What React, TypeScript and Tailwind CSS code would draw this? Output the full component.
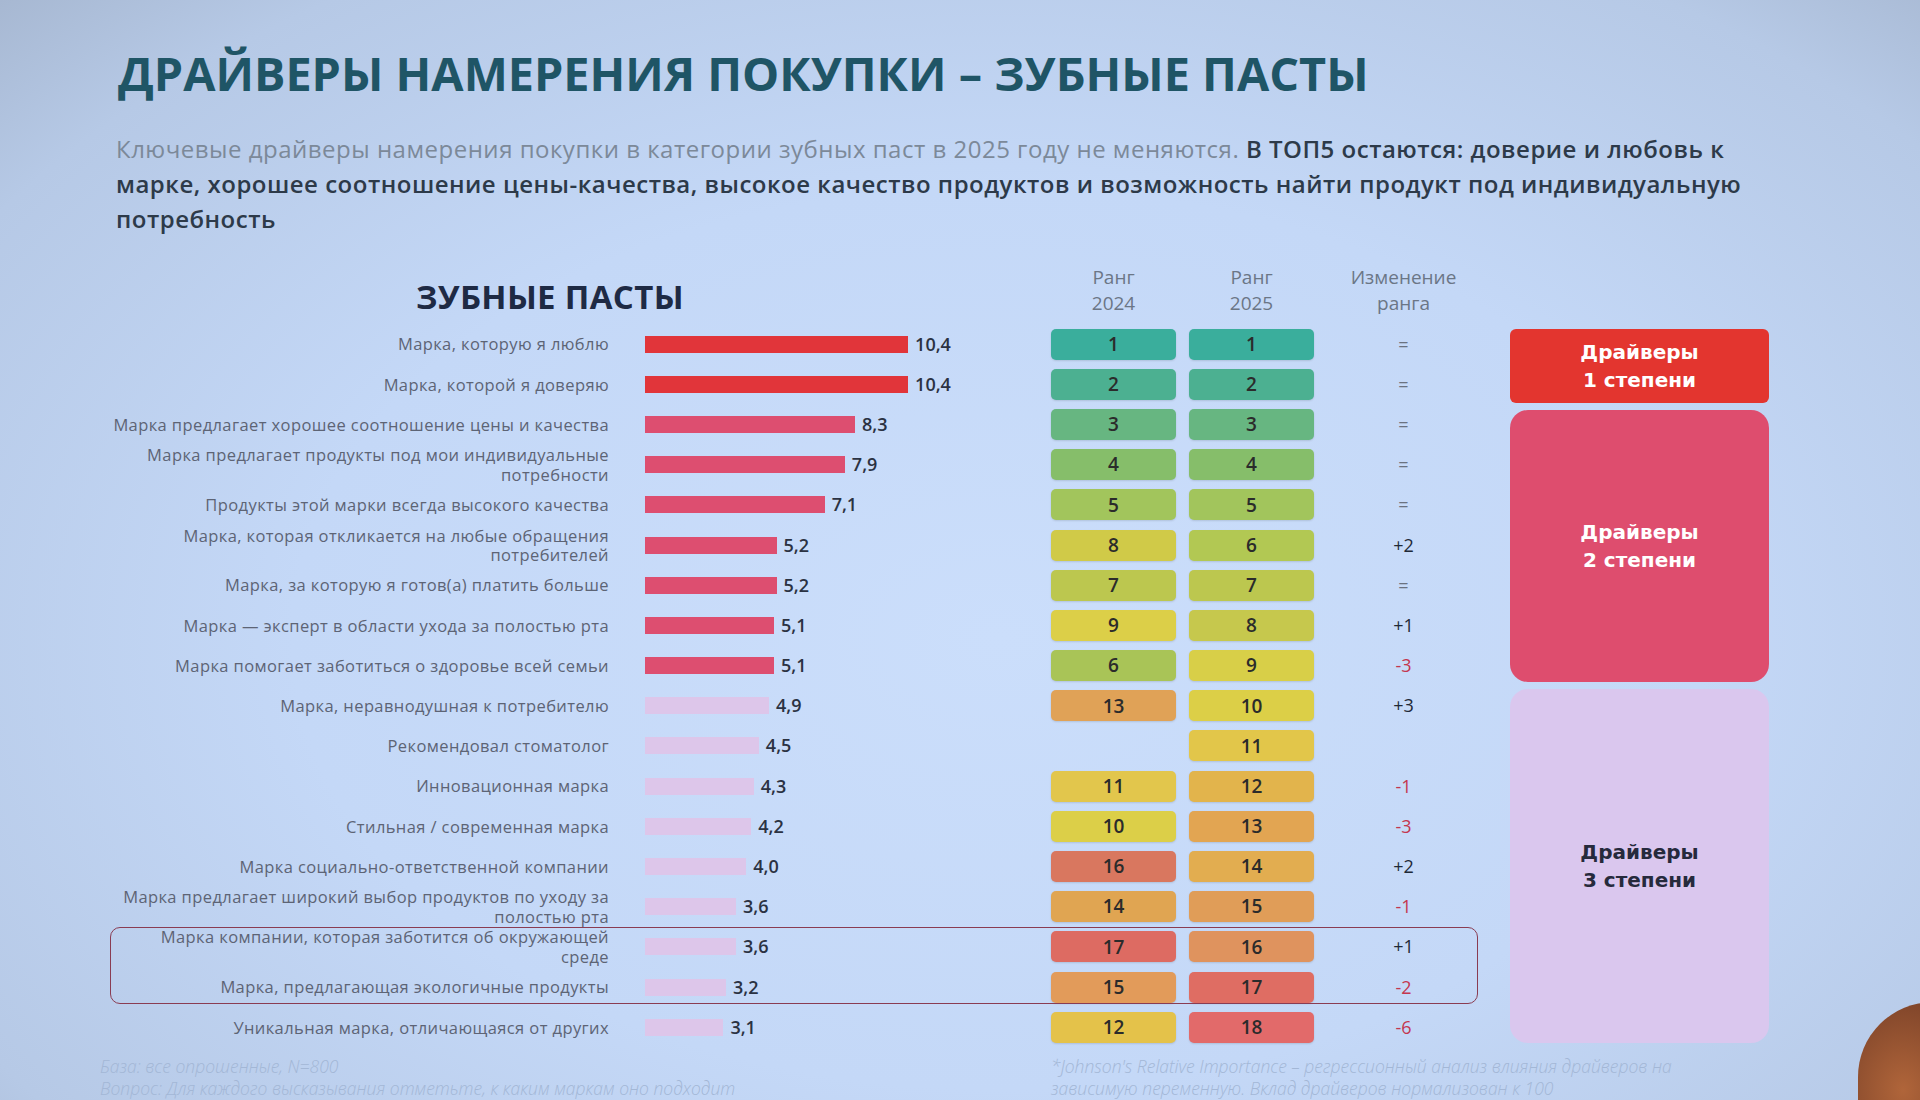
import React from 'react';

type Tier = 1 | 2 | 3;

interface DriverRow {
    label: string[];
    value: number;
    tier: Tier;
    rank2024?: number;
    color2024?: string;
    rank2025: number;
    color2025: string;
    change: string;
}

const rows: DriverRow[] = [
    { label: ['Марка, которую я люблю'], value: 10.4, tier: 1, rank2024: 1, color2024: '#3aae9c', rank2025: 1, color2025: '#3aae9c', change: '=' },
    { label: ['Марка, которой я доверяю'], value: 10.4, tier: 1, rank2024: 2, color2024: '#4cb091', rank2025: 2, color2025: '#4cb091', change: '=' },
    { label: ['Марка предлагает хорошее соотношение цены и качества'], value: 8.3, tier: 2, rank2024: 3, color2024: '#67b681', rank2025: 3, color2025: '#67b681', change: '=' },
    { label: ['Марка предлагает продукты под мои индивидуальные', 'потребности'], value: 7.9, tier: 2, rank2024: 4, color2024: '#86be6a', rank2025: 4, color2025: '#86be6a', change: '=' },
    { label: ['Продукты этой марки всегда высокого качества'], value: 7.1, tier: 2, rank2024: 5, color2024: '#a2c55c', rank2025: 5, color2025: '#a2c55c', change: '=' },
    { label: ['Марка, которая откликается на любые обращения', 'потребителей'], value: 5.2, tier: 2, rank2024: 8, color2024: '#d0ca48', rank2025: 6, color2025: '#b2c853', change: '+2' },
    { label: ['Марка, за которую я готов(а) платить больше'], value: 5.2, tier: 2, rank2024: 7, color2024: '#bcc74f', rank2025: 7, color2025: '#bcc74f', change: '=' },
    { label: ['Марка — эксперт в области ухода за полостью рта'], value: 5.1, tier: 2, rank2024: 9, color2024: '#dccf48', rank2025: 8, color2025: '#c6c84d', change: '+1' },
    { label: ['Марка помогает заботиться о здоровье всей семьи'], value: 5.1, tier: 2, rank2024: 6, color2024: '#a9c457', rank2025: 9, color2025: '#d8cf48', change: '-3' },
    { label: ['Марка, неравнодушная к потребителю'], value: 4.9, tier: 3, rank2024: 13, color2024: '#e0a257', rank2025: 10, color2025: '#dccf47', change: '+3' },
    { label: ['Рекомендовал стоматолог'], value: 4.5, tier: 3, rank2025: 11, color2025: '#e2c64a', change: '' },
    { label: ['Инновационная марка'], value: 4.3, tier: 3, rank2024: 11, color2024: '#e2c64c', rank2025: 12, color2025: '#e2b44c', change: '-1' },
    { label: ['Стильная / современная марка'], value: 4.2, tier: 3, rank2024: 10, color2024: '#dccf48', rank2025: 13, color2025: '#e2a552', change: '-3' },
    { label: ['Марка социально-ответственной компании'], value: 4.0, tier: 3, rank2024: 16, color2024: '#d9775f', rank2025: 14, color2025: '#e2ad50', change: '+2' },
    { label: ['Марка предлагает широкий выбор продуктов по уходу за', 'полостью рта'], value: 3.6, tier: 3, rank2024: 14, color2024: '#e0a552', rank2025: 15, color2025: '#e09d58', change: '-1' },
    { label: ['Марка компании, которая заботится об окружающей', 'среде'], value: 3.6, tier: 3, rank2024: 17, color2024: '#dd6b62', rank2025: 16, color2025: '#df935e', change: '+1' },
    { label: ['Марка, предлагающая экологичные продукты'], value: 3.2, tier: 3, rank2024: 15, color2024: '#e29b5a', rank2025: 17, color2025: '#df6d63', change: '-2' },
    { label: ['Уникальная марка, отличающаяся от других'], value: 3.1, tier: 3, rank2024: 12, color2024: '#e4c24a', rank2025: 18, color2025: '#e26a6a', change: '-6' },
];

const barClass: Record<Tier, string> = {
    1: 'bg-[#e1353a]',
    2: 'bg-[#dd4e70]',
    3: 'bg-[#ddc6ea]',
};

function changeClass(change: string): string {
    if (change.startsWith('-')) {
        return 'text-[#c4364f]';
    }
    if (change.startsWith('+')) {
        return 'text-[#1f2937]';
    }
    return 'text-[#6b7280]';
}

function formatValue(value: number): string {
    return value.toFixed(1).replace('.', ',');
}

function RankCell({ rank, color }: { rank?: number; color?: string }) {
    if (rank === undefined) {
        return <div className="h-[31px] w-[125px]" />;
    }

    return (
        <div
            className="flex h-[31px] w-[125px] items-center justify-center rounded-[5px] text-[19px] font-semibold text-[#2b2b2b] shadow-[0_1px_2px_rgba(0,0,0,0.12)]"
            style={{ backgroundColor: color }}
        >
            {rank}
        </div>
    );
}

function Row({ row }: { row: DriverRow }) {
    return (
        <div className="flex h-[40.2px] items-center">
            <div className="w-[499px] text-right text-[16.5px] leading-[19.5px] tracking-[0.4px] text-[#5d6475]">
                {row.label.map((line) => (
                    <div key={line}>{line}</div>
                ))}
            </div>
            <div className="ml-[36px] flex w-[406px] items-center">
                <div className={`h-[17px] ${barClass[row.tier]}`} style={{ width: row.value * 25.3 }} />
                <span className="ml-[7px] text-[18px] font-semibold text-[#2b3242]">{formatValue(row.value)}</span>
            </div>
            <RankCell rank={row.rank2024} color={row.color2024} />
            <div className="w-[13px]" />
            <RankCell rank={row.rank2025} color={row.color2025} />
            <div className={`ml-[27px] w-[125px] text-center text-[18px] font-medium ${changeClass(row.change)}`}>
                {row.change}
            </div>
        </div>
    );
}

function Legend() {
    return (
        <div className="flex w-[259px] flex-col gap-[7px] pt-[67px] font-['DejaVu_Sans',sans-serif] text-[20px] leading-[28px] font-bold">
            <div className="flex h-[74px] items-center justify-center rounded-[6px] bg-[#e3352f] text-center text-white">
                Драйверы
                <br />
                1 степени
            </div>
            <div className="flex h-[272px] items-center justify-center rounded-[18px] bg-[#de4d6e] text-center text-white">
                Драйверы
                <br />
                2 степени
            </div>
            <div className="flex h-[354px] items-center justify-center rounded-[18px] bg-[#dac7ee] text-center text-[#262a3c]">
                Драйверы
                <br />
                3 степени
            </div>
        </div>
    );
}

export default function App() {
    return (
        <div className="relative h-[1100px] w-[1920px] overflow-hidden bg-[radial-gradient(ellipse_at_52%_58%,#cbdefb_0%,#c4d8f7_50%,#b6c9e6_85%,#a7b8d2_100%)] font-['Open_Sans',sans-serif]">
            <h1 className="ml-[118px] pt-[46px] text-[46.8px] leading-[54px] font-bold text-[#1f5566]">
                ДРАЙВЕРЫ НАМЕРЕНИЯ ПОКУПКИ – ЗУБНЫЕ ПАСТЫ
            </h1>

            <p className="mt-[31px] ml-[116px] text-[24px] leading-[35px] tracking-[0.5px] text-[#7c8999]">
                Ключевые драйверы намерения покупки в категории зубных паст в 2025 году не меняются.{' '}
                <span className="font-semibold text-[#2d3a49]">
                    В ТОП5 остаются: доверие и любовь к
                    <br />
                    марке, хорошее соотношение цены-качества, высокое качество продуктов и возможность найти продукт под индивидуальную
                    <br />
                    потребность
                </span>
            </p>

            <div className="mt-[26px] ml-[110px] flex gap-[44px]">
                <div>
                    <div className="flex h-[62px] items-center">
                        <div className="w-[941px] pt-[8px] pl-[306px] text-[33px] font-bold tracking-[0.01em] text-[#1e2a44]">
                            ЗУБНЫЕ ПАСТЫ
                        </div>
                        <div className="mt-[2px] flex self-start text-center text-[19px] leading-[26px] text-[#6b7686]">
                            <div className="w-[125px]">
                                Ранг
                                <br />
                                2024
                            </div>
                            <div className="w-[13px]" />
                            <div className="w-[125px]">
                                Ранг
                                <br />
                                2025
                            </div>
                            <div className="ml-[27px] w-[125px]">
                                Изменение
                                <br />
                                ранга
                            </div>
                        </div>
                    </div>

                    <div className="relative">
                        {rows.map((row) => (
                            <Row key={row.label[0]} row={row} />
                        ))}
                        <div className="pointer-events-none absolute top-[603px] left-0 h-[77px] w-[1368px] rounded-[10px] border-[1.5px] border-[#8a3c52]" />
                    </div>
                </div>

                <Legend />
            </div>

            <div className="absolute top-[1055px] left-[100px] text-[17.5px] leading-[22px] font-light text-[#a3b7d6] italic">
                <div>База: все опрошенные, N=800</div>
                <div>Вопрос: Для каждого высказывания отметьте, к каким маркам оно подходит</div>
            </div>
            <div className="absolute top-[1055px] left-[1051px] text-[17.5px] leading-[22px] font-light text-[#a3b7d6] italic">
                <div>*Johnson's Relative Importance – регрессионный анализ влияния драйверов на</div>
                <div>зависимую переменную. Вклад драйверов нормализован к 100</div>
            </div>

            <div className="absolute top-[1002px] left-[1858px] h-[220px] w-[150px] rounded-full bg-[radial-gradient(ellipse_at_30%_40%,#b0653a_0%,#7a4128_55%,#4a2a1e_100%)]" />
        </div>
    );
}
